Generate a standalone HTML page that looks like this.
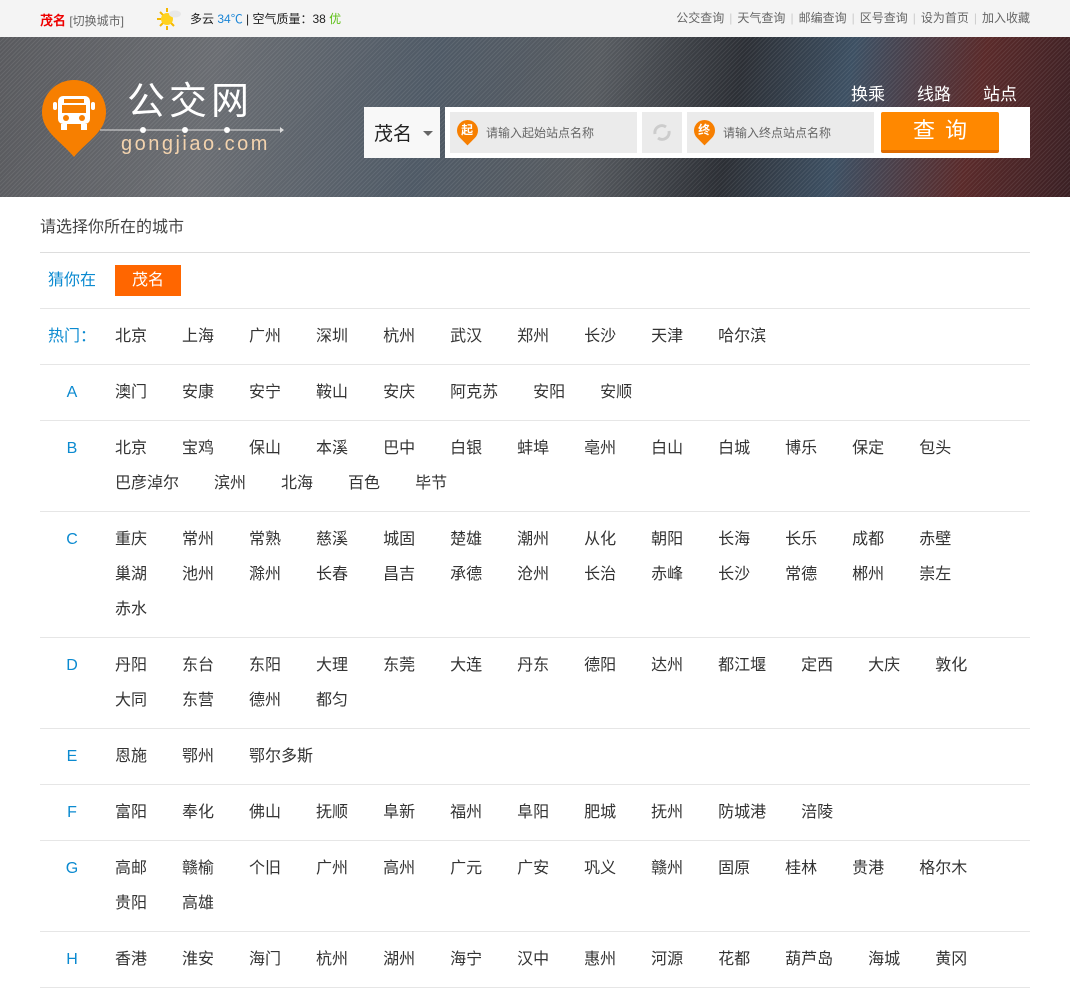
<!DOCTYPE html>
<html><head><meta charset="utf-8">
<style>
*{margin:0;padding:0;box-sizing:border-box}
body{width:1070px;height:973px;overflow:hidden;background:#fff;font-family:"Liberation Sans","Noto Sans CJK SC",sans-serif;color:#333}
.top{height:37px;background:#f4f4f4;position:relative;font-size:12px}
.top .l{position:absolute;left:40px;top:10px;color:#666}
.top .l b{color:#e00;font-size:13px}
.top .w{position:absolute;left:156px;top:6px;width:26px;height:26px}
.top .wt{position:absolute;left:190px;top:10px;color:#222}
.top .r{position:absolute;right:40px;top:9px;color:#666}
.top .r i{color:#ccc;font-style:normal;margin:0 5px}
.ban{height:160px;position:relative;overflow:hidden;background:linear-gradient(100deg,#595a5e 0%,#6a6d72 20%,#4f5a66 40%,#575b60 55%,#2c2f35 68%,#3d5063 78%,#5a2a2a 90%,#3a2024 100%)}
.ban:before{content:"";position:absolute;left:0;top:0;right:0;bottom:0;background:repeating-linear-gradient(135deg,rgba(255,255,255,.08) 0 1px,transparent 1px 3px)}
.logo{position:absolute;left:40px;top:42px}
.ltxt{position:absolute;left:127px;top:42px;color:#fff;font-size:38px;letter-spacing:4px;line-height:46px}
.dom{position:absolute;left:121px;top:96px;color:#f3d3ae;font-size:20px;letter-spacing:2.5px}
.tab{position:absolute;top:43px;font-size:17px;color:#fff}
.sel{position:absolute;left:364px;top:70px;width:76px;height:51px;background:#f8f8f8;font-size:19px;padding:12px 0 0 10px;color:#222}
.sel:after{content:"";position:absolute;right:7px;top:24px;border:5px solid transparent;border-top-color:#666}
.box{position:absolute;left:445px;top:70px;width:585px;height:51px;background:#fff}
.in{position:absolute;top:5px;height:41px;background:#ebebeb;font-size:12px;color:#666;padding:12px 0 0 36px}
.pin{position:absolute;left:7px;top:8px;width:21px;height:21px;border-radius:50% 50% 50% 0;transform:rotate(-45deg);background:#f77f00}
.pin span{position:absolute;left:0;top:2px;width:21px;text-align:center;transform:rotate(45deg);color:#fff;font-size:12px;font-weight:bold;line-height:16px}
.btn{position:absolute;left:436px;top:5px;width:118px;height:41px;background:#ff8800;border-bottom:3px solid #e06c00;border-radius:2px;color:#fff;font-size:22px;text-align:center;line-height:38px;letter-spacing:10px;padding-left:10px}
.main{margin:0 40px}
.ttl{height:56px;border-bottom:1px solid #ddd;font-size:16px;padding-top:16px;color:#444}
.row{display:flex;border-bottom:1px solid #e6e6e6;padding:10px 0}
.row .k{width:75px;flex:none;color:#0b8ad0;font-size:16px;line-height:35px;text-align:center;padding-right:11px}
.row .k.h{text-align:left;padding-left:8px;padding-right:0}
.row .v{flex:1;font-size:16px;line-height:35px;color:#333}
.row .v span{display:inline-block;margin-right:35px;white-space:nowrap}
.cur{display:inline-block;background:#f60;color:#fff;width:66px;height:31px;line-height:31px;text-align:center;margin-top:2px}
</style></head><body>
<div class="top">
<div class="l"><b>茂名</b> [切换城市]</div>
<svg class="w" viewBox="0 0 26 26"><g stroke="#f5b800" stroke-width="2"><line x1="11" y1="2" x2="11" y2="6"/><line x1="11" y1="20" x2="11" y2="24"/><line x1="1" y1="13" x2="5" y2="13"/><line x1="4" y1="6" x2="7" y2="9"/><line x1="4" y1="20" x2="7" y2="17"/><line x1="18" y1="20" x2="15" y2="17"/></g><circle cx="11" cy="13" r="6" fill="#ffd21e"/><ellipse cx="19" cy="8" rx="6" ry="3.5" fill="#e8e8e8"/></svg>
<div class="wt">多云 <span style="color:#1a85d6">34℃</span> | 空气质量：38 <span style="color:#5cbf14">优</span></div>
<div class="r">公交查询<i>|</i>天气查询<i>|</i>邮编查询<i>|</i>区号查询<i>|</i>设为首页<i>|</i>加入收藏</div>
</div>
<div class="ban">
<svg class="logo" width="70" height="82" viewBox="0 0 70 82">
<path d="M34 1a32 32 0 0 1 32 32c0 20-20 30-32 45C22 63 2 53 2 33A32 32 0 0 1 34 1z" fill="#f77f00"/>
<rect x="18" y="17" width="32" height="28" rx="5" fill="#fff"/><rect x="24" y="20" width="20" height="4" fill="#f77f00"/><rect x="22" y="26" width="24" height="8" fill="#f77f00"/>
<circle cx="26" cy="39" r="3" fill="#f77f00"/><circle cx="42" cy="39" r="3" fill="#f77f00"/><rect x="21" y="45" width="6" height="6" fill="#fff"/><rect x="41" y="45" width="6" height="6" fill="#fff"/>
<rect x="13" y="23" width="4" height="8" rx="2" fill="#fff"/><rect x="51" y="23" width="4" height="8" rx="2" fill="#fff"/>
</svg>
<svg style="position:absolute;left:100px;top:88px" width="186" height="10"><line x1="0" y1="5" x2="182" y2="5" stroke="#ddd" stroke-width="1"/><path d="M180 2l4 3-4 3z" fill="#ddd"/><circle cx="43" cy="5" r="3" fill="#fff"/><circle cx="85" cy="5" r="3" fill="#fff"/><circle cx="127" cy="5" r="3" fill="#fff"/></svg>
<div class="ltxt">公交网</div>
<div class="dom">gongjiao.com</div>
<div class="tab" style="left:851px">换乘</div>
<div class="tab" style="left:917px">线路</div>
<div class="tab" style="left:983px">站点</div>
<div class="sel">茂名</div>
<div class="box">
<div class="in" style="left:5px;width:187px"><div class="pin"><span>起</span></div>请输入起始站点名称</div>
<div class="in" style="left:197px;width:40px;padding:0"><svg width="40" height="41" viewBox="0 0 40 41"><path d="M13 22a7 7 0 0 1 11-7M27 19a7 7 0 0 1-11 7" stroke="#ccc" stroke-width="3" fill="none"/></svg></div>
<div class="in" style="left:242px;width:187px"><div class="pin"><span>终</span></div>请输入终点站点名称</div>
<div class="btn">查询</div>
</div>
</div>
<div class="main">
<div class="ttl">请选择你所在的城市</div>
<div class="row"><div class="k h">猜你在</div><div class="v"><span class="cur">茂名</span></div></div>
<div class="row"><div class="k h">热门：</div><div class="v"><span>北京</span><span>上海</span><span>广州</span><span>深圳</span><span>杭州</span><span>武汉</span><span>郑州</span><span>长沙</span><span>天津</span><span>哈尔滨</span></div></div>
<div class="row"><div class="k">A</div><div class="v"><span>澳门</span><span>安康</span><span>安宁</span><span>鞍山</span><span>安庆</span><span>阿克苏</span><span>安阳</span><span>安顺</span></div></div>
<div class="row"><div class="k">B</div><div class="v"><span>北京</span><span>宝鸡</span><span>保山</span><span>本溪</span><span>巴中</span><span>白银</span><span>蚌埠</span><span>亳州</span><span>白山</span><span>白城</span><span>博乐</span><span>保定</span><span>包头</span><span>巴彦淖尔</span><span>滨州</span><span>北海</span><span>百色</span><span>毕节</span></div></div>
<div class="row"><div class="k">C</div><div class="v"><span>重庆</span><span>常州</span><span>常熟</span><span>慈溪</span><span>城固</span><span>楚雄</span><span>潮州</span><span>从化</span><span>朝阳</span><span>长海</span><span>长乐</span><span>成都</span><span>赤壁</span><span>巢湖</span><span>池州</span><span>滁州</span><span>长春</span><span>昌吉</span><span>承德</span><span>沧州</span><span>长治</span><span>赤峰</span><span>长沙</span><span>常德</span><span>郴州</span><span>崇左</span><span>赤水</span></div></div>
<div class="row"><div class="k">D</div><div class="v"><span>丹阳</span><span>东台</span><span>东阳</span><span>大理</span><span>东莞</span><span>大连</span><span>丹东</span><span>德阳</span><span>达州</span><span>都江堰</span><span>定西</span><span>大庆</span><span>敦化</span><span>大同</span><span>东营</span><span>德州</span><span>都匀</span></div></div>
<div class="row"><div class="k">E</div><div class="v"><span>恩施</span><span>鄂州</span><span>鄂尔多斯</span></div></div>
<div class="row"><div class="k">F</div><div class="v"><span>富阳</span><span>奉化</span><span>佛山</span><span>抚顺</span><span>阜新</span><span>福州</span><span>阜阳</span><span>肥城</span><span>抚州</span><span>防城港</span><span>涪陵</span></div></div>
<div class="row"><div class="k">G</div><div class="v"><span>高邮</span><span>赣榆</span><span>个旧</span><span>广州</span><span>高州</span><span>广元</span><span>广安</span><span>巩义</span><span>赣州</span><span>固原</span><span>桂林</span><span>贵港</span><span>格尔木</span><span>贵阳</span><span>高雄</span></div></div>
<div class="row"><div class="k">H</div><div class="v"><span>香港</span><span>淮安</span><span>海门</span><span>杭州</span><span>湖州</span><span>海宁</span><span>汉中</span><span>惠州</span><span>河源</span><span>花都</span><span>葫芦岛</span><span>海城</span><span>黄冈</span></div></div>
</div>
</body></html>
